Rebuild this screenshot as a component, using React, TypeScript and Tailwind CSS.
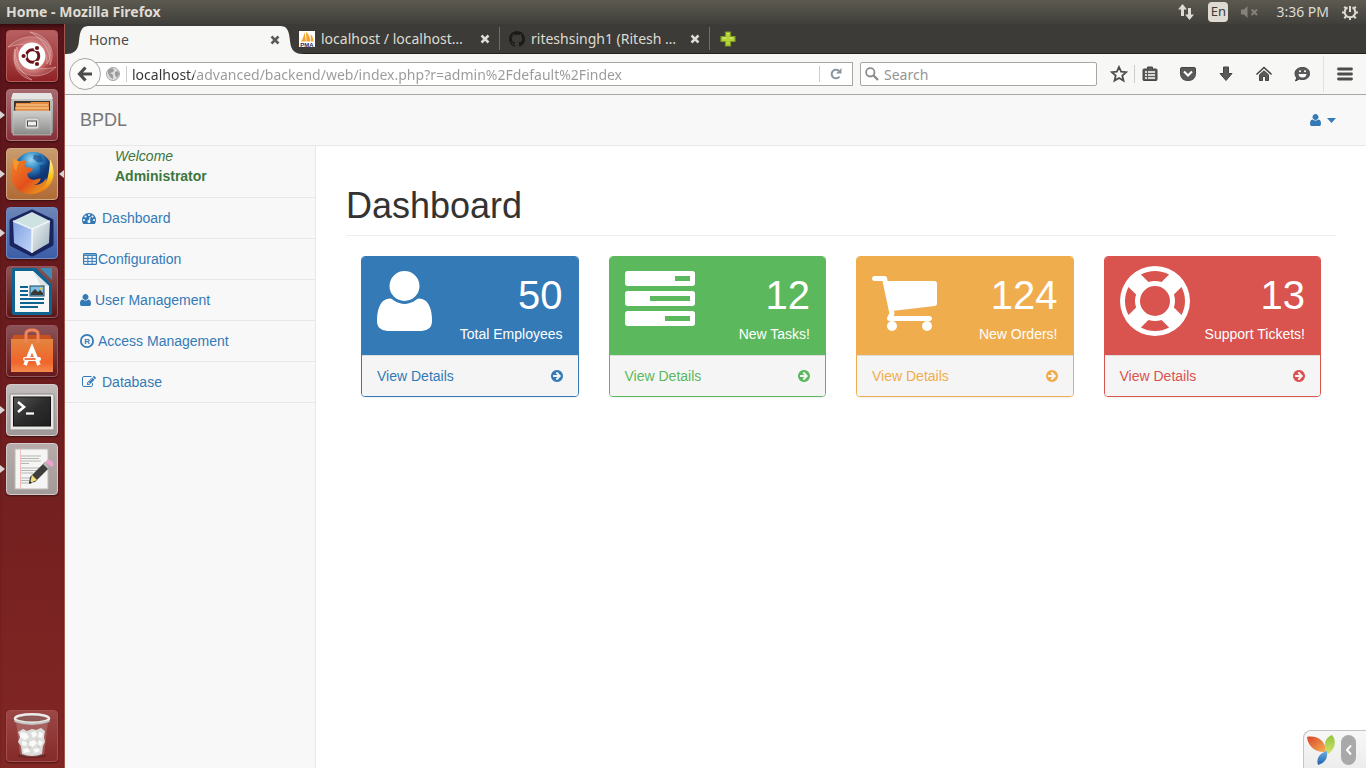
import React from "react";

const USER =
  "M1600 1405q0 120-73 189.5t-194 69.5h-874q-121 0-194-69.5t-73-189.5q0-53 3.5-103.5t14-109 26.5-108.5 43-97.5 62-81 85.5-53.5 111.5-20q9 0 42 21.5t74.5 48 108 48 133.5 21.5 133.5-21.5 108-48 74.5-48 42-21.5q61 0 111.5 20t85.5 53.5 62 81 43 97.5 26.5 108.5 14 109 3.5 103.5zm-320-893q0 159-112.5 271.5t-271.5 112.5-271.5-112.5-112.5-271.5 112.5-271.5 271.5-112.5 271.5 112.5 112.5 271.5z";
const TASKS =
  "M1024 1408h640v-128h-640v128zm-384-512h1024v-128h-1024v128zm640-512h384v-128h-384v128zm512 832v256q0 26-19 45t-45 19h-1664q-26 0-45-19t-19-45v-256q0-26 19-45t45-19h1664q26 0 45 19t19 45zm0-512v256q0 26-19 45t-45 19h-1664q-26 0-45-19t-19-45v-256q0-26 19-45t45-19h1664q26 0 45 19t19 45zm0-512v256q0 26-19 45t-45 19h-1664q-26 0-45-19t-19-45v-256q0-26 19-45t45-19h1664q26 0 45 19t19 45z";
const CART =
  "M704 1536q0 52-38 90t-90 38-90-38-38-90 38-90 90-38 90 38 38 90zm896 0q0 52-38 90t-90 38-90-38-38-90 38-90 90-38 90 38 38 90zm128-1088v512q0 24-16.5 42.5t-40.5 21.5l-1044 122q13 60 13 70 0 16-24 64h920q26 0 45 19t19 45-19 45-45 19h-1024q-26 0-45-19t-19-45q0-11 8-31.5t16-36 21.5-40 15.5-29.5l-177-823h-204q-26 0-45-19t-19-45 19-45 45-19h256q16 0 28.5 6.5t19.5 15.5 13 24.5 8 26 5.5 29.5 4.5 26h1201q26 0 45 19t19 45z";
const RING =
  "M896 0q182 0 348 71t286 191 191 286 71 348-71 348-191 286-286 191-348 71-348-71-286-191-191-286-71-348 71-348 191-286 286-191 348-71zm0 128q-190 0-361 90l194 194q82-28 167-28t167 28l194-194q-171-90-361-90zm-678 1129l194-194q-28-82-28-167t28-167l-194-194q-90 171-90 361t90 361zm678 407q190 0 361-90l-194-194q-82 28-167 28t-167-28l-194 194q171 90 361 90zm0-384q159 0 271.5-112.5t112.5-271.5-112.5-271.5-271.5-112.5-271.5 112.5-112.5 271.5 112.5 271.5 271.5 112.5zm484-217l194 194q90-171 90-361t-90-361l-194 194q28 82 28 167t-28 167z";
const ARROW =
  "M1413 896q0-27-18-45l-91-91-362-362q-18-18-45-18t-45 18l-91 91q-18 18-18 45t18 45l189 189h-502q-26 0-45 19t-19 45v128q0 26 19 45t45 19h502l-189 189q-18 18-18 45t18 45l91 91q18 18 45 18t45-18l362-362 91-91q18-18 18-45zm251 0q0 209-103 385.5t-279.5 279.5-385.5 103-385.5-103-279.5-279.5-103-385.5 103-385.5 279.5-279.5 385.5-103 385.5 103 279.5 279.5 103 385.5z";
const GAUGE =
  "M384 1152q0-53-37.5-90.5t-90.5-37.5-90.5 37.5-37.5 90.5 37.5 90.5 90.5 37.5 90.5-37.5 37.5-90.5zm192-448q0-53-37.5-90.5t-90.5-37.5-90.5 37.5-37.5 90.5 37.5 90.5 90.5 37.5 90.5-37.5 37.5-90.5zm428 481l101-382q6-26-7.5-48.5t-38.5-29.5-48 6.5-30 39.5l-101 382q-60 5-107 43.5t-63 98.5q-20 77 20 146t117 89 146-20 89-117q16-60-6-117t-72-91zm660-33q0-53-37.5-90.5t-90.5-37.5-90.5 37.5-37.5 90.5 37.5 90.5 90.5 37.5 90.5-37.5 37.5-90.5zm-640-640q0-53-37.5-90.5t-90.5-37.5-90.5 37.5-37.5 90.5 37.5 90.5 90.5 37.5 90.5-37.5 37.5-90.5zm448 192q0-53-37.5-90.5t-90.5-37.5-90.5 37.5-37.5 90.5 37.5 90.5 90.5 37.5 90.5-37.5 37.5-90.5zm320 448q0 261-141 483-19 29-54 29h-1402q-35 0-54-29-141-221-141-483 0-182 71-348t191-286 286-191 348-71 348 71 286 191 191 286 71 348z";
const PENCIL =
  "M888 1184l116-116-152-152-116 116v56h96v96h56zm440-720q-16-16-33 1l-350 350q-17 17-1 33t33-1l350-350q17-17 1-33zm80 594v190q0 119-84.5 203.5t-203.5 84.5h-832q-119 0-203.5-84.5t-84.5-203.5v-832q0-119 84.5-203.5t203.5-84.5h832q63 0 117 25 15 7 18 23 3 17-9 29l-49 49q-14 14-32 8-23-6-45-6h-832q-66 0-113 47t-47 113v832q0 66 47 113t113 47h832q66 0 113-47t47-113v-126q0-13 9-22l64-64q15-15 35-7t20 29zm-96-738l288 288-672 672h-288v-288zm444 132l-92 92-288-288 92-92q28-28 68-28t68 28l152 152q28 28 28 68t-28 68z";

function Glyph({ d, className, x = 0, w = 1792 }: { d: string; className: string; x?: number; w?: number }) {
  return (
    <svg aria-hidden="true" className={className} viewBox={`${x} 0 ${w} 1792`} fill="currentColor">
      <path d={d} />
    </svg>
  );
}

function GridGlyph() {
  return (
    <svg aria-hidden="true" className="h-3.5 w-3.5" viewBox="0 0 14 14" fill="none" stroke="currentColor">
      <rect x="0.6" y="1.6" width="12.8" height="10.8" rx="1" strokeWidth="1.2" />
      <path d="M1 3.2h12" strokeWidth="1.4" />
      <path d="M1 6.4h12M1 9.4h12M4.9 3v9.5M9.1 3v9.5" />
    </svg>
  );
}

function RegisteredGlyph() {
  return (
    <svg aria-hidden="true" className="h-3.5 w-3.5" viewBox="0 0 14 14">
      <circle cx="7" cy="7" r="6.1" fill="none" stroke="currentColor" strokeWidth="1.8" />
      <text x="7.2" y="9.9" textAnchor="middle" fontSize="8" fontWeight="700" fontFamily="Liberation Sans, sans-serif" fill="currentColor">
        R
      </text>
    </svg>
  );
}

/* ---------- desktop launcher ---------- */

const tile = "relative flex h-[52px] w-[52px] items-center justify-center rounded border shadow-[0_1px_2px_rgba(0,0,0,.45)]";
const pic = "h-[50px] w-[50px]";

function DashIcon() {
  return (
    <svg className={pic} viewBox="0 0 50 50">
      <defs>
        <radialGradient id="dash"><stop offset="0" stopColor="#f0a5a3" /><stop offset=".65" stopColor="#c76463" stopOpacity=".9" /><stop offset="1" stopColor="#a03437" stopOpacity="0" /></radialGradient>
      </defs>
      <circle cx="25" cy="25" r="24" fill="url(#dash)" />
      <g fill="#fff" fillOpacity=".14" stroke="#f0c4c2" strokeOpacity=".6" strokeWidth=".8">
        <path d="M1 16C12 5 30 2 40 12C45 18 44 28 40 33C40 20 30 8 1 16z" />
        <path d="M49 36C36 49 18 46 11 37C6 30 7 22 10 16C11 30 24 42 49 36z" />
        <path d="M23 1C40 4 50 18 43 34C44 20 36 8 23 1zM25 49C12 46 4 34 8 18C8 32 14 42 25 49z" />
      </g>
      <circle cx="25" cy="25" r="13.4" fill="#fff" />
      <circle cx="25.5" cy="25" r="6.3" fill="none" stroke="#6b1418" strokeWidth="3" />
      <g stroke="#fff" strokeWidth="1.2" fill="#6b1418">
        <circle cx="16.6" cy="25" r="2.7" />
        <circle cx="30" cy="17" r="2.7" />
        <circle cx="30" cy="33" r="2.7" />
      </g>
    </svg>
  );
}

function FilesIcon() {
  return (
    <svg className={pic} viewBox="0 0 50 50">
      <defs>
        <linearGradient id="cab" x2="0" y2="1"><stop stopColor="#cfcfcd" /><stop offset="1" stopColor="#8a8a88" /></linearGradient>
      </defs>
      <path d="M6 3h38l2 9v31H4V12z" fill="url(#cab)" />
      <path d="M6 3h38l2 6H4z" fill="#e4e4e2" />
      <rect x="7" y="11" width="36" height="10" fill="#3b322d" />
      <path d="M9 13h14l1-1h18v10H8z" fill="#e58b3e" />
      <path d="M9 15h32M8 18h34" stroke="#fbd9a6" strokeWidth="1.2" />
      <path d="M6 21h38v24H6z" fill="url(#cab)" stroke="#c9c9c7" strokeWidth=".7" />
      <rect x="18" y="28" width="14" height="11" rx="2" fill="#d9d9d7" stroke="#a5a5a3" />
      <rect x="20.5" y="31" width="9" height="5" fill="#eee" stroke="#4c4c4a" />
    </svg>
  );
}

function FirefoxIcon() {
  return (
    <svg className={pic} viewBox="-1 0 52 52">
      <defs>
        <radialGradient id="globe" cx=".45" cy=".2"><stop stopColor="#9ad8f2" /><stop offset=".5" stopColor="#2f86c4" /><stop offset="1" stopColor="#0f3272" /></radialGradient>
        <linearGradient id="fox" x2=".9" y2="1"><stop stopColor="#f28a26" /><stop offset=".6" stopColor="#e2501c" /><stop offset="1" stopColor="#e8a01f" /></linearGradient>
        <linearGradient id="tail" x2="0" y2="1"><stop stopColor="#fff59b" /><stop offset=".5" stopColor="#fbc51d" /><stop offset="1" stopColor="#ea6d19" /></linearGradient>
      </defs>
      <circle cx="26" cy="23" r="20" fill="url(#globe)" />
      <path d="M27 6l7 1 3 6-6 1-5-4zM33 17l7-1 3 8-5 9-5-6z" fill="#0e3b7c" opacity=".55" />
      <path d="M44 11C49 21 49 32 42 39C36 46 27 48 20 45C32 44 38 39 41 31C43 24 43 18 44 11z" fill="url(#tail)" />
      <path d="M6 9C8 11 9 12 12 13C15 11 18 12 20 13C17 15 17 17 18 19C21 19 24 19 26 21C26 23 22 24 20 26C20 29 23 32 27 32C30 32 32 30 34 31C34 34 30 37 27 37C33 38 37 35 40 30C41 39 33 47 24 47C12 47 3 38 3 26C3 20 5 14 6 9z" fill="url(#fox)" />
      <path d="M6 9c-1 5-1 10 3 14 0-4 1-7 3-10-3-1-4-2-6-4z" fill="#f7a23b" opacity=".7" />
    </svg>
  );
}

function CubeIcon() {
  return (
    <svg className={pic} viewBox="0 0 50 50">
      <defs>
        <linearGradient id="cl" x2="1" y2="1"><stop stopColor="#7f9fe0" /><stop offset="1" stopColor="#c4d7f8" /></linearGradient>
        <linearGradient id="cr" x2="1" y2="1"><stop stopColor="#eef3f6" /><stop offset="1" stopColor="#9db0bb" /></linearGradient>
      </defs>
      <path d="M25 4L44 13V36L25 46L5 36V13z" fill="#1a2560" stroke="#1a2560" strokeWidth="5" strokeLinejoin="round" />
      <path d="M25 4L43 13L25 21L6 13z" fill="#cfe2e2" />
      <path d="M6 13L25 21V45L7 35z" fill="url(#cl)" />
      <path d="M43 13L25 21V45L42 35z" fill="url(#cr)" />
      <path d="M6 13L25 21L43 13M25 21V45" fill="none" stroke="#fff" strokeWidth="1.5" opacity=".8" />
    </svg>
  );
}

function WriterIcon() {
  return (
    <svg className={pic} viewBox="0 0 50 50">
      <path d="M33 1h12v12z" fill="#3f8bb5" />
      <path d="M6 1h23L45 18V46Q45 48 42 48H8Q5 48 5 46V3Q5 1 6 1z" fill="#0f6390" />
      <path d="M8 4h18l16 15v26H8z" fill="#f7f7f7" />
      <path d="M26 4l16 15H34z" fill="#dfe3e5" />
      <g stroke="#0f6390" strokeWidth="2">
        <path d="M13 20h8M13 24h8M13 28h8M13 32h24M13 36h24M13 40h18" />
      </g>
      <rect x="23" y="19" width="14" height="10" fill="#7fc1e6" stroke="#17466a" />
      <path d="M24 28v-2l4-4 3 3 2-2 3 3v2z" fill="#3a3a32" />
      <circle cx="34" cy="21.5" r="1.3" fill="#f2c33a" />
    </svg>
  );
}

function StoreIcon() {
  return (
    <svg className={pic} viewBox="0 0 50 50">
      <defs>
        <linearGradient id="bag" x2="0" y2="1"><stop stopColor="#e3853f" /><stop offset=".7" stopColor="#f0652a" /><stop offset="1" stopColor="#f28b4f" /></linearGradient>
      </defs>
      <path d="M7 9h36l2 5H4z" fill="#c9501f" />
      <path d="M4 13h42v33H4z" fill="url(#bag)" />
      <path d="M19 17V8Q19 4 25 4T31 8V17" fill="none" stroke="#f0835a" strokeWidth="3" />
      <path d="M18 39L25 22L32 39" fill="none" stroke="#fff" strokeWidth="3.6" />
      <rect x="16" y="31" width="18" height="4" rx="2" fill="#fff" />
      <rect x="17.5" y="32.2" width="11" height="1.6" fill="#ee5a22" />
    </svg>
  );
}

function TerminalIcon() {
  return (
    <svg className={pic} viewBox="0 0 50 50">
      <defs>
        <linearGradient id="scr" x2="1" y2="1"><stop stopColor="#555" /><stop offset=".5" stopColor="#2d2d2d" /><stop offset="1" stopColor="#1e1e1e" /></linearGradient>
      </defs>
      <rect x="3" y="9" width="44" height="36" rx="1.5" fill="#e9e9e7" stroke="#8f8b8b" />
      <rect x="6.500" y="12" width="37" height="29" fill="url(#scr)" stroke="#111" />
      <path d="M11 17l6 5-6 5" fill="none" stroke="#fff" strokeWidth="2.600" />
      <path d="M19 28.500h8" stroke="#fff" strokeWidth="2.200" />
    </svg>
  );
}

function EditorIcon() {
  return (
    <svg className={pic} viewBox="0 0 50 50">
      <rect x="8" y="5" width="33" height="40" fill="#f5f5f3" stroke="#bdb9b9" />
      <path d="M13.500 5v40" stroke="#f0bcbc" />
      <path d="M14 12h20M14 14.500h18M14 17h20M14 19.500h8M14 24h20M14 26.500h17M14 29h12M14 34h12M14 36.500h10M14 39h8" stroke="#b5b5b3" />
      <path d="M38 18l5 5-15 15-6 1 1-6z" fill="#3e3e3e" />
      <path d="M38 18l5 5-2 2-5-5z" fill="#b9b9b9" />
      <path d="M40 16q2-1 5 1t1 5l-2 1-6-5z" fill="#e9a3cc" />
      <path d="M25 31l5 5-7 3z" fill="#f0dd7d" />
      <path d="M23 37l2 2-3 1z" fill="#222" />
    </svg>
  );
}

function TrashIcon() {
  return (
    <svg className={pic} viewBox="0 0 50 50">
      <ellipse cx="25" cy="44.500" rx="14" ry="2.500" fill="#4a1c1c" opacity=".6" />
      <path d="M9 10h32l-4 34q-12 4-24 0z" fill="#d9b9b9" opacity=".28" />
      <path d="M11 21l5-3 4 2 5-2 4 1 5-2 4 3-1 6 1 5-2 4-1 8q-10 4-20 0l-1-8-3-4 2-5z" fill="#dcdcda" />
      <path d="M14 21l5 1 3 4-4 3-5-3zM24 22l4-2 2 4-4 3zM32 21l4 1-1 5-4-1zM15 30l5 1-1 4-4-1zM22 31l5-2 3 3-4 4-4-2zM32 29l4 2-2 4-3-2zM16 38l5-1 2 4-6 1zM26 38l5-1 2 3-5 2z" fill="#f9f9f7" />
      <path d="M20 30l2 2M29 28l2 1M21 36l3 1M31 35l1 2" stroke="#c0c0be" />
      <ellipse cx="25" cy="7.500" rx="17" ry="4.300" fill="#8d5a58" stroke="#ecece9" strokeWidth="2.500" />
      <path d="M7.500 9v2Q25 17 42.500 11V9Q25 15 7.500 9z" fill="#c4c4c1" />
    </svg>
  );
}

type Launchable = { name: string; icon: React.ReactNode; look: string; running?: boolean; active?: boolean };
const apps: Launchable[] = [
  { name: "Dash", icon: <DashIcon />, look: "border-[#b8595a] bg-linear-to-b from-[#b76062] to-[#8f2226]" },
  { name: "Files", icon: <FilesIcon />, look: "border-[#b07478] bg-linear-to-b from-[#a56a6f] to-[#86303b]", running: true },
  { name: "Firefox", icon: <FirefoxIcon />, look: "border-[#cfa982] bg-linear-to-b from-[#c99c6f] to-[#b06a35]", running: true, active: true },
  { name: "NetBeans", icon: <CubeIcon />, look: "border-[#6f8cc4] bg-linear-to-b from-[#6d86b8] to-[#3c5ea8]", running: true },
  { name: "Writer", icon: <WriterIcon />, look: "border-[#96585c] bg-linear-to-b from-[#8b5357] to-[#5b1519]" },
  { name: "Software", icon: <StoreIcon />, look: "border-[#96585c] bg-linear-to-b from-[#8b5357] to-[#65191d]" },
  { name: "Terminal", icon: <TerminalIcon />, look: "border-[#d1cbcb] bg-linear-to-b from-[#c3bdbd] to-[#a19999]", running: true },
  { name: "Text editor", icon: <EditorIcon />, look: "border-[#d1cbcb] bg-linear-to-b from-[#b7abab] to-[#a39a9a]", running: true },
];

function LauncherButton({ app }: { app: Launchable }) {
  return (
    <div className="relative flex justify-center pr-px">
      <button aria-label={app.name} className={`${tile} ${app.look}`}>{app.icon}</button>
      {app.running && (
        <svg aria-hidden="true" className="absolute top-5 left-0 h-3 w-[5px]" viewBox="0 0 5 12"><path d="M0 2l5 4-5 4z" fill="#d8d4d4" /></svg>
      )}
      {app.active && (
        <svg aria-hidden="true" className="absolute top-5 right-0 h-3 w-[5px]" viewBox="0 0 5 12"><path d="M5 2L0 6l5 4z" fill="#d8d4d4" /></svg>
      )}
    </div>
  );
}

function Launcher() {
  return (
    <aside className="flex w-[65px] shrink-0 flex-col justify-between border-r border-[#a4564f] bg-linear-to-b from-[#5b1419] to-[#822724] pt-1.5 pb-1.5 shadow-[inset_0_4px_4px_-2px_rgba(0,0,0,.5)]">
      <div className="flex flex-col gap-[7px]">
        {apps.map((a) => <LauncherButton key={a.name} app={a} />)}
      </div>
      <LauncherButton app={{ name: "Trash", icon: <TrashIcon />, look: "border-[#a5504f] bg-linear-to-b from-[#9c4746] to-[#842a29]" }} />
    </aside>
  );
}

/* ---------- system bar ---------- */

function SystemBar() {
  return (
    <header className="flex h-6 shrink-0 items-center justify-between bg-linear-to-b from-[#5c5a50] to-[#403f3a] pr-[7px] pl-1.5 text-[#dfdbd2]">
      <h2 className="text-sm font-bold">Home - Mozilla Firefox</h2>
      <div className="flex items-center">
        <svg aria-hidden="true" className="h-[18px] w-[18px]" viewBox="0 0 18 18" fill="currentColor">
          <path d="M5.500 1L10 6.500H7V13H4V6.500H1zM12.500 17L8 11.500h3V5h3v6.500h3z" />
        </svg>
        <span className="ml-[13px] flex h-5 w-5 items-center justify-center rounded-sm bg-[#dfdbd2] text-[13px] text-[#3c3b37]">En</span>
        <svg aria-hidden="true" className="ml-3 h-[18px] w-[19px] text-[#85827a]" viewBox="0 0 19 18" fill="currentColor">
          <path d="M1 6.500h3L7.500 3v12L4 11.500H1z" />
          <path d="M11.500 6.500l5.500 5.500M17 6.500L11.500 12" stroke="currentColor" strokeWidth="2" />
        </svg>
        <span className="ml-[17px] text-sm">3:36 PM</span>
        <svg aria-hidden="true" className="ml-3 h-[18px] w-[18px]" viewBox="0 0 18 18" fill="none" stroke="currentColor" strokeWidth="2">
          <path d="M6.500 4.300A5.300 5.300 0 1 0 11.500 4.300M9 3v6M9 14.500V17M1 9.500h2.500M14.500 9.500H17M3.200 15.200l2-2M14.800 15.200l-2-2M3.200 3.800l2 2M14.800 3.800l-2 2" />
        </svg>
      </div>
    </header>
  );
}

/* ---------- browser ---------- */

function Close({ label, className }: { label: string; className: string }) {
  return (
    <button aria-label={label} className={className}>
      <svg className="h-2.5 w-2.5" viewBox="0 0 10 10" stroke="currentColor" strokeWidth="2.500"><path d="M1.500 1.500l7 7M8.500 1.500l-7 7" /></svg>
    </button>
  );
}

function Tabs() {
  return (
    <div className="flex h-[30px] shrink-0 items-stretch border-b border-[#23221f] bg-[#3c3b37] text-[#dfdbd2]">
      <div className="relative z-10 -mb-px flex">
        <svg aria-hidden="true" className="h-[30px] w-6" viewBox="0 0 24 30"><path d="M0 30C9 30 13 27 14 17C15 6 17 2 24 2V30z" fill="#f7f7f5" /></svg>
        <div className="mt-0.5 flex w-[191px] items-center justify-between bg-[#f7f7f5] text-sm text-[#4c4c4c]">
          <button>Home</button>
          <Close label="Close Home" className="text-[#5a5a58]" />
        </div>
        <svg aria-hidden="true" className="-mr-[5px] h-[30px] w-6" viewBox="0 0 24 30"><path d="M24 30C15 30 11 27 10 17C9 6 7 2 0 2V30z" fill="#f7f7f5" /></svg>
      </div>
      <div className="relative z-10 my-[3px] flex w-[201px] items-center gap-1.5 border-r border-[#6f6e6a] pr-[9px]">
        <svg aria-hidden="true" className="h-4 w-4 shrink-0" viewBox="0 0 16 16">
          <rect width="16" height="16" fill="#fff" />
          <path d="M2 10.500C4 8 5 4 5.500 1L7 10.500zM7.500 10.500L7 1c3 2 4 6 4.500 9.500zM12 10.500L11.500 3c2 2 3 5 3 7.500z" fill="#f8a32c" />
          <text x="8" y="15.800" textAnchor="middle" fontSize="6" fontWeight="700" fontFamily="Liberation Sans, sans-serif" fill="#2f2f6e">PMA</text>
        </svg>
        <button className="grow truncate text-left text-sm">localhost / localhost…</button>
        <Close label="Close localhost" className="text-[#dfdbd2]" />
      </div>
      <div className="my-[3px] flex w-[210px] items-center gap-1.5 border-r border-[#6f6e6a] px-[9px]">
        <svg aria-hidden="true" className="h-4 w-4 shrink-0" viewBox="0 0 16 16" fill="#1b1b1a">
          <path d="M8 0C3.580 0 0 3.580 0 8c0 3.540 2.290 6.530 5.470 7.590.4.070.550-.170.550-.380 0-.190-.010-.820-.010-1.490-2.010.370-2.530-.490-2.690-.940-.090-.230-.480-.940-.820-1.130-.280-.150-.680-.520-.010-.530.630-.010 1.080.580 1.230.820.720 1.210 1.870.870 2.330.660.070-.520.280-.870.510-1.070-1.780-.200-3.640-.890-3.640-3.950 0-.870.310-1.590.820-2.150-.080-.200-.360-1.020.080-2.120 0 0 .670-.210 2.200.820.640-.180 1.320-.270 2-.270s1.360.090 2 .270c1.530-1.040 2.200-.820 2.200-.820.440 1.100.160 1.920.080 2.120.510.560.820 1.270.820 2.150 0 3.070-1.870 3.750-3.650 3.950.290.250.540.730.540 1.480 0 1.070-.010 1.930-.010 2.200 0 .210.150.460.550.380A8.010 8.010 0 0 0 16 8c0-4.420-3.580-8-8-8z" />
        </svg>
        <button className="grow truncate text-left text-sm">riteshsingh1 (Ritesh …</button>
        <Close label="Close riteshsingh1" className="text-[#dfdbd2]" />
      </div>
      <button aria-label="New tab" className="ml-2.5">
        <svg className="h-4 w-4" viewBox="0 0 16 16"><path d="M5.500 1h5v4.500H15v5h-4.500V15h-5v-4.500H1v-5h4.500z" fill="#b5d334" stroke="#7d9a22" strokeWidth="1.200" /><path d="M7 2.500h2M2.500 7h4M9.500 7h4" stroke="#dbed82" /></svg>
      </button>
    </div>
  );
}

function ToolButton({ label, children }: { label: string; children: React.ReactNode }) {
  return (
    <button aria-label={label} className="flex h-6 w-[38px] items-center justify-center">
      <svg className="h-[18px] w-[18px]" viewBox="0 0 18 18" fill="#5a5a5a" stroke="#444" strokeWidth="1">{children}</svg>
    </button>
  );
}

function Toolbar() {
  return (
    <div className="flex h-[41px] shrink-0 items-center border-b border-[#a7a7a3] bg-[#f7f7f5] pl-1">
      <button aria-label="Back" className="z-10 flex h-8 w-8 shrink-0 items-center justify-center rounded-full border border-[#a5a5a1] bg-[#fbfbfa]">
        <svg className="h-4 w-4" viewBox="0 0 16 16" fill="none" stroke="#4c4c4c" strokeWidth="3.200"><path d="M8.500 1.500L2.500 8l6 6.500M3 8h12" /></svg>
      </button>
      <div className="-ml-1.5 flex h-6 grow items-center border border-[#a7a7a3] bg-white">
        <svg aria-hidden="true" className="ml-2.5 h-3.5 w-3.5 shrink-0" viewBox="0 0 14 14">
          <circle cx="7" cy="7" r="6.500" fill="#dcdcdc" stroke="#a5a5a5" />
          <path d="M2 3l4-2 2 2-1 2-3 1 3 2v4l-3-2-2-4zM9 5l3-1 1 3-2 4-2-3z" fill="#9a9a9a" />
        </svg>
        <span className="mr-1 ml-1.5 h-4 w-px shrink-0 bg-[#cdcdcb]" />
        <input
          aria-label="Address"
          className="min-w-0 grow bg-[linear-gradient(to_right,#333_63px,#999_63px)] bg-clip-text pt-px pl-px text-sm text-transparent outline-none"
          defaultValue="localhost/advanced/backend/web/index.php?r=admin%2Fdefault%2Findex"
        />
        <button aria-label="Reload" className="flex h-4 w-[33px] shrink-0 items-center justify-center border-l border-[#cdcdcb]">
          <svg className="h-3 w-3" viewBox="0 0 12 12"><path d="M9.500 8.500A4.300 4.300 0 1 1 8.800 2.800" fill="none" stroke="#8795a1" strokeWidth="2" /><path d="M11.500 0v5.500H6z" fill="#8795a1" /></svg>
        </button>
      </div>
      <label className="ml-[7px] flex h-6 w-[237px] shrink-0 items-center rounded-xs border border-[#a7a7a3] bg-white pl-1">
        <svg aria-hidden="true" className="h-3.5 w-3.5 shrink-0" viewBox="0 0 14 14" fill="none" stroke="#8c8c8c"><circle cx="5.300" cy="5.300" r="4.200" strokeWidth="1.800" /><path d="M8.500 8.500l4.500 4.500" strokeWidth="2.400" /></svg>
        <input aria-label="Search" placeholder="Search" className="ml-[5px] min-w-0 grow pt-px text-sm text-[#333] outline-none placeholder:text-[#949494]" />
      </label>
      <div className="ml-[13px] flex h-[18px] w-[25px] shrink-0 items-center border-r border-[#cdcdcb]">
        <button aria-label="Bookmark this page">
          <svg className="h-[18px] w-[18px]" viewBox="0 0 18 18"><path d="M9 2l2.100 4.700 5.100.5-3.900 3.400 1.200 5L9 13l-4.500 2.600 1.200-5-3.900-3.400 5.100-.5z" fill="none" stroke="#4c4c4c" strokeWidth="1.800" /></svg>
        </button>
      </div>
      <div className="-ml-1 flex shrink-0 items-center">
        <ToolButton label="Bookmarks menu">
          <path d="M3 4h3.500V2h5v2H15q1 0 1 1v9.500q0 1-1 1H3q-1 0-1-1V5q0-1 1-1z" />
          <path d="M4 7h2M7 7h7M4 10h2M7 10h7M4 13h2M7 13h7" stroke="#fff" strokeWidth="1.500" />
        </ToolButton>
        <ToolButton label="Pocket">
          <path d="M1.500 4q0-1.500 1.500-1.500h12q1.500 0 1.500 1.500v4q0 7.500-7.500 7.500T1.500 8z" />
          <path d="M5 6.500l4 4 4-4" fill="none" stroke="#fff" strokeWidth="2" />
        </ToolButton>
        <ToolButton label="Downloads"><path d="M6.500 2h5v6.500H15L9 15.500 3 8.500h3.500z" /></ToolButton>
        <ToolButton label="Home page">
          <path d="M1.500 9.500L9 2.500l7.500 7" fill="none" strokeWidth="1.600" />
          <path d="M4.500 9.800l4.500-4 4.500 4v5.700h-3v-4h-3v4h-3z" />
        </ToolButton>
        <ToolButton label="Chat">
          <path d="M9.500 2.500c4.500 0 7 2.500 7 6s-2.500 6-7 6q-1.500 0-3-.5L2.500 16l1.200-3.200Q2 11 2 8.500C2 5 5 2.500 9.500 2.500z" />
          <path d="M5.500 9h8q-.5 3.500-4 3.500t-4-3.500z" fill="#fff" stroke="none" />
          <circle cx="7" cy="6.300" r="1" fill="#fff" stroke="none" /><circle cx="12" cy="6.300" r="1" fill="#fff" stroke="none" />
        </ToolButton>
      </div>
      <span className="ml-0.5 h-9 w-px shrink-0 bg-[#e2e2e0]" />
      <button aria-label="Open menu" className="mr-[13px] ml-[13px] shrink-0">
        <svg className="h-4 w-4" viewBox="0 0 16 16" stroke="#4c4c4c" strokeWidth="2.800" strokeLinecap="round"><path d="M1.500 3h13M1.500 8h13M1.500 13h13" /></svg>
      </button>
    </div>
  );
}

/* ---------- web page ---------- */

const menu = [
  { text: "Dashboard", icon: <Glyph d={GAUGE} className="h-3.5 w-3.5" />, pad: "pl-[17px] gap-1.5" },
  { text: "Configuration", icon: <GridGlyph />, pad: "pl-[18px] gap-px" },
  { text: "User Management", icon: <Glyph d={USER} x={192} w={1408} className="h-3.5 w-[11px]" />, pad: "pl-[15px] gap-1" },
  { text: "Access Management", icon: <RegisteredGlyph />, pad: "pl-[15px] gap-1" },
  { text: "Database", icon: <Glyph d={PENCIL} className="h-3.5 w-3.5" />, pad: "pl-[17px] gap-1.5" },
];

const cards = [
  { count: "50", label: "Total Employees", icon: <Glyph d={USER} x={192} w={1408} className="h-[70px] w-[55px]" />, edge: "border-[#337ab7]", fill: "bg-[#337ab7]", ink: "text-[#337ab7]" },
  { count: "12", label: "New Tasks!", icon: <Glyph d={TASKS} className="h-[70px] w-[70px]" />, edge: "border-[#5cb85c]", fill: "bg-[#5cb85c]", ink: "text-[#5cb85c]" },
  { count: "124", label: "New Orders!", icon: <Glyph d={CART} x={64} w={1664} className="h-[70px] w-[65px]" />, edge: "border-[#f0ad4e]", fill: "bg-[#f0ad4e]", ink: "text-[#f0ad4e]" },
  { count: "13", label: "Support Tickets!", icon: <Glyph d={RING} className="h-[70px] w-[70px]" />, edge: "border-[#d9534f]", fill: "bg-[#d9534f]", ink: "text-[#d9534f]" },
];

function Page() {
  return (
    <div className="flex grow flex-col bg-white font-['Liberation_Sans',Arial,sans-serif] text-sm leading-5 text-[#333]">
      <header className="flex h-[51px] shrink-0 items-center justify-between border-b border-[#e7e7e7] bg-[#f8f8f8] pr-[30px] pl-[15px]">
        <a href="#" className="text-lg text-[#777]">BPDL</a>
        <button aria-label="Account" className="flex items-center gap-1.5 text-[#337ab7]">
          <Glyph d={USER} x={192} w={1408} className="h-3.5 w-[11px]" />
          <svg aria-hidden="true" className="h-[5px] w-[9px]" viewBox="0 0 9 5"><path d="M0 0h9L4.500 5z" fill="currentColor" /></svg>
        </button>
      </header>
      <div className="flex grow">
        <nav className="w-[251px] shrink-0 border-r border-[#e7e7e7] bg-[#f8f8f8]">
          <div className="border-b border-[#e7e7e7] pb-[11px] pl-[50px] text-[#3c763d]">
            <p className="italic">Welcome</p>
            <p className="font-bold">Administrator</p>
          </div>
          <ul>
            {menu.map((m) => (
              <li key={m.text} className="border-b border-[#e7e7e7]">
                <a href="#" className={`flex items-center py-2.5 text-[#337ab7] ${m.pad}`}>{m.icon}{m.text}</a>
              </li>
            ))}
          </ul>
        </nav>
        <main className="grow px-[30px]">
          <h1 className="mt-10 border-b border-[#eee] pb-[9px] text-4xl leading-10">Dashboard</h1>
          <div className="mt-5 grid grid-cols-4 gap-[30px] px-[15px]">
            {cards.map((c) => (
              <section key={c.label} className={`overflow-hidden rounded border shadow-[0_1px_1px_rgba(0,0,0,.05)] ${c.edge}`}>
                <div className={`flex justify-between px-[15px] pt-[9px] pb-[11px] text-white ${c.fill}`}>
                  {c.icon}
                  <div className="pt-px text-right">
                    <div className="text-[40px] leading-[57px]">{c.count}</div>
                    <div>{c.label}</div>
                  </div>
                </div>
                <a href="#" className={`flex items-center justify-between border-t border-[#ddd] bg-[#f5f5f5] px-[15px] py-2.5 ${c.ink}`}>
                  View Details
                  <Glyph d={ARROW} x={128} w={1536} className="h-3.5 w-3" />
                </a>
              </section>
            ))}
          </div>
        </main>
      </div>
    </div>
  );
}

function DebugBar() {
  return (
    <div className="fixed right-0 bottom-0 z-20 flex h-[38px] w-[63px] items-center gap-[5px] rounded-tl-lg border-t border-l border-[#c4c4c4] bg-linear-to-b from-[#f7f7f7] to-[#ededed] pl-[3px]">
      <svg role="img" aria-label="Yii debugger" className="h-8 w-[29px]" viewBox="0 0 29 32">
        <defs>
          <linearGradient id="yr" x2="1" y2="1"><stop stopColor="#d8432c" /><stop offset="1" stopColor="#f6b352" /></linearGradient>
          <linearGradient id="yg" x2="0" y2="1"><stop stopColor="#8fc63e" /><stop offset="1" stopColor="#d3e36a" /></linearGradient>
          <linearGradient id="yb" x2="0" y2="1"><stop stopColor="#6fb0dd" /><stop offset="1" stopColor="#1f5fae" /></linearGradient>
        </defs>
        <path d="M0 3C10 1 19 7 19 18C9 19 1 13 0 3z" fill="url(#yr)" />
        <path d="M25 1C30 7 28 15 21 20C16 12 17 4 25 1z" fill="url(#yg)" />
        <path d="M20 17C21 24 18 29 11 31C9 25 12 19 20 17z" fill="url(#yb)" />
      </svg>
      <button aria-label="Expand toolbar" className="flex h-[30px] w-[15px] items-center justify-center rounded-full bg-[#a9a9a9]">
        <svg className="h-2.5 w-1.5" viewBox="0 0 6 10" fill="none" stroke="#fff" strokeWidth="2"><path d="M5 0.500L1 5l4 4.500" /></svg>
      </button>
    </div>
  );
}

export default function App() {
  return (
    <div className="flex min-h-screen flex-col font-['Noto_Sans',sans-serif]">
      <SystemBar />
      <div className="flex grow">
        <Launcher />
        <div className="flex min-w-0 grow flex-col bg-[#3c3b37]">
          <Tabs />
          <Toolbar />
          <Page />
        </div>
      </div>
      <DebugBar />
    </div>
  );
}
